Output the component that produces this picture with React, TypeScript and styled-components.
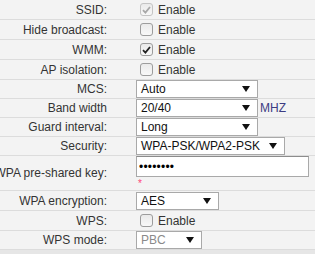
import React from "react";
import styled, { createGlobalStyle } from "styled-components";

const Global = createGlobalStyle`
  html, body {
    margin: 0;
    padding: 0;
    background: #f3f3f3;
  }
`;

const Page = styled.div`
  width: 315px;
  height: 254px;
  overflow: hidden;
  display: flex;
  flex-direction: column;
  background: #f3f3f3;
  font-family: "Liberation Sans", Arial, sans-serif;
  font-size: 12px;
  color: #333;
`;

const Form = styled.div`
  display: flex;
  flex-direction: column;
`;

const Row = styled.div<{ $h: number }>`
  display: grid;
  grid-template-columns: 107px 1fr;
  column-gap: 29px;
  align-items: center;
  height: ${(p) => p.$h}px;
  border-bottom: 1px solid #dcdcdc;
`;

const Label = styled.div`
  display: flex;
  justify-content: flex-end;
  white-space: nowrap;
  color: #333;
`;

const Control = styled.div`
  display: flex;
  align-items: center;
  gap: 2px;
  height: 100%;
`;

const CheckWrap = styled.label`
  display: flex;
  align-items: center;
  gap: 5px;
  padding-left: 4px;
  color: #333;
`;

const Box = styled.span<{ $disabled?: boolean }>`
  display: flex;
  align-items: center;
  justify-content: center;
  width: 11px;
  height: 11px;
  border: 1px solid ${(p) => (p.$disabled ? "#c4c4c4" : "#9c9c9c")};
  border-radius: 3px;
  background: linear-gradient(#eaeaea, #f8f8f8);
`;

const Select = styled.div<{ $w: number; $disabled?: boolean }>`
  display: flex;
  align-items: center;
  justify-content: space-between;
  box-sizing: border-box;
  width: ${(p) => p.$w}px;
  height: 18px;
  padding: 0 7px 0 4px;
  background: #fff;
  border: 1px solid #a9a9a9;
  color: ${(p) => (p.$disabled ? "#8a8a8a" : "#111")};
  white-space: nowrap;
`;

const Arrow = styled.span`
  width: 0;
  height: 0;
  border-left: 4px solid transparent;
  border-right: 4px solid transparent;
  border-top: 6px solid #111;
`;

const Unit = styled.span`
  color: #3c3c82;
`;

const KeyCol = styled.div`
  display: flex;
  flex-direction: column;
  align-items: flex-start;
  height: 100%;
`;

const Input = styled.div`
  box-sizing: border-box;
  width: 173px;
  height: 21px;
  padding: 0 2px;
  display: flex;
  align-items: center;
  background: #fff;
  border: 1px solid #a9a9a9;
  border-top-color: #8c8c8c;
  color: #000;
  letter-spacing: 0.2px;
`;

const Required = styled.span`
  color: #ff4477;
  font-size: 10px;
  line-height: 10px;
  margin: 2px 0 0 2px;
`;

const Footer = styled.div`
  flex: 1;
  background: #e6e6e6;
`;

const Check = ({ checked, disabled }: { checked?: boolean; disabled?: boolean }) => (
  <CheckWrap>
    <Box $disabled={disabled}>
      {checked && (
        <svg width="9" height="8" viewBox="0 0 9 8">
          <path
            d="M1 4.2 L3.4 6.6 L8 1"
            fill="none"
            stroke={disabled ? "#a8a8a8" : "#222"}
            strokeWidth="1.8"
          />
        </svg>
      )}
    </Box>
    Enable
  </CheckWrap>
);

const Drop = ({ value, w, disabled }: { value: string; w: number; disabled?: boolean }) => (
  <Select $w={w} $disabled={disabled}>
    {value}
    <Arrow />
  </Select>
);

export default function App() {
  return (
    <Page>
      <Global />
      <Form>
        <Row $h={19}>
          <Label>SSID:</Label>
          <Control><Check checked disabled /></Control>
        </Row>
        <Row $h={19}>
          <Label>Hide broadcast:</Label>
          <Control><Check /></Control>
        </Row>
        <Row $h={19}>
          <Label>WMM:</Label>
          <Control><Check checked /></Control>
        </Row>
        <Row $h={19}>
          <Label>AP isolation:</Label>
          <Control><Check /></Control>
        </Row>
        <Row $h={18}>
          <Label>MCS:</Label>
          <Control><Drop value="Auto" w={122} /></Control>
        </Row>
        <Row $h={18}>
          <Label>Band width</Label>
          <Control>
            <Drop value="20/40" w={122} />
            <Unit>MHZ</Unit>
          </Control>
        </Row>
        <Row $h={18}>
          <Label>Guard interval:</Label>
          <Control><Drop value="Long" w={122} /></Control>
        </Row>
        <Row $h={18}>
          <Label>Security:</Label>
          <Control><Drop value="WPA-PSK/WPA2-PSK" w={149} /></Control>
        </Row>
        <Row $h={34}>
          <Label>WPA pre-shared key:</Label>
          <KeyCol>
            <Input>••••••••</Input>
            <Required>*</Required>
          </KeyCol>
        </Row>
        <Row $h={19}>
          <Label>WPA encryption:</Label>
          <Control><Drop value="AES" w={83} /></Control>
        </Row>
        <Row $h={19}>
          <Label>WPS:</Label>
          <Control><Check /></Control>
        </Row>
        <Row $h={18}>
          <Label>WPS mode:</Label>
          <Control><Drop value="PBC" w={66} disabled /></Control>
        </Row>
      </Form>
      <Footer />
    </Page>
  );
}
